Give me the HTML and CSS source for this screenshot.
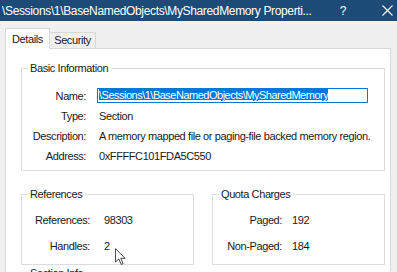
FILE: index.html
```html
<!DOCTYPE html>
<html>
<head>
<meta charset="utf-8">
<link rel="stylesheet" href="styles.css">
</head>
<body>
<div class="window">
  <div class="titlebar">
    <span class="title">\Sessions\1\BaseNamedObjects\MySharedMemory Properti...</span>
    <span class="tb-btn help">?</span>
    <span class="tb-btn close">
      <svg width="11" height="11" viewBox="0 0 11 11"><path d="M0.5 0.5 L10.5 10.5 M10.5 0.5 L0.5 10.5" stroke="#fff" stroke-width="1.1" fill="none"/></svg>
    </span>
  </div>
  <div class="body">
    <div class="tabs">
      <div class="tab active">Details</div>
      <div class="tab">Security</div>
    </div>
    <div class="panel">
      <fieldset class="group basic">
        <legend>Basic Information</legend>
        <div class="rows">
          <span class="lbl">Name:</span>
          <span class="val"><span class="field"><span class="sel">\Sessions\1\BaseNamedObjects\MySharedMemory</span></span></span>
          <span class="lbl">Type:</span>
          <span class="val">Section</span>
          <span class="lbl">Description:</span>
          <span class="val">A memory mapped file or paging-file backed memory region.</span>
          <span class="lbl">Address:</span>
          <span class="val">0xFFFFC101FDA5C550</span>
        </div>
      </fieldset>
      <div class="pair">
        <fieldset class="group refs">
          <legend>References</legend>
          <div class="rows2">
            <span class="lbl">References:</span><span class="val">98303</span>
            <span class="lbl">Handles:</span><span class="val">2</span>
          </div>
        </fieldset>
        <fieldset class="group quota">
          <legend>Quota Charges</legend>
          <div class="rows3">
            <span class="lbl">Paged:</span><span class="val">192</span>
            <span class="lbl">Non-Paged:</span><span class="val">184</span>
          </div>
        </fieldset>
      </div>
      <fieldset class="group section">
        <legend>Section Info</legend>
      </fieldset>
    </div>
  </div>
  <svg class="cursor" width="11" height="18" viewBox="0 0 13 21">
    <path d="M0.5 0.5 L0.5 16.5 L4.5 12.8 L7.3 19.3 L9.6 18.3 L6.9 12 L12 12 Z" fill="#fff" stroke="#222" stroke-width="1"/>
  </svg>
</div>
</body>
</html>
```
FILE: styles.css
```css
* { box-sizing: border-box; }
html, body { margin: 0; padding: 0; }
body {
  width: 397px;
  height: 272px;
  overflow: hidden;
  background: #f0f0f0;
  font-family: "Liberation Sans", Arial, sans-serif;
  font-size: 11px;
  letter-spacing: -0.4px;
  color: #1a1a1a;
}
.window { position: relative; width: 397px; height: 272px; overflow: hidden; }
.titlebar {
  height: 21px;
  background: #1d4b78;
  color: #fff;
  display: flex;
  align-items: center;
  font-size: 12px;
  letter-spacing: -0.35px;
  padding-left: 2px;
}
.title { width: 334px; white-space: nowrap; overflow: hidden; }
.tb-btn { display: flex; align-items: center; justify-content: center; }
.help { width: 14px; margin-right: 30px; font-size: 12px; }
.close { width: 14px; }
.body { padding: 6px 6px 0 5px; }
.tabs { display: flex; align-items: flex-end; height: 21px; position: relative; z-index: 1; }
.tab {
  border: 1px solid #d9d9d9;
  border-bottom: none;
  background: #f0f0f0;
  height: 16px;
  width: 46px;
  text-align: center;
  line-height: 15px;
}
.tab.active {
  background: #fff;
  width: 45px;
  height: 21px;
  padding-top: 3px;
  margin-bottom: -1px;
}
.tab + .tab { border-left: none; }
.panel {
  background: #fff;
  border: 1px solid #d9d9d9;
  height: 240px;
  padding: 13px 5px 0 15px;
}
.group {
  border: 1px solid #dcdcdc;
  margin: 0;
  padding: 0;
}
.group legend {
  padding: 0 3px 0 2px;
  margin-left: 6px;
  line-height: 13px;
}
.basic { height: 109px; }
.rows {
  display: grid;
  grid-template-columns: 64px auto;
  column-gap: 13px;
  row-gap: 6px;
  padding-top: 14px;
  line-height: 14px;
}
.lbl { text-align: right; }
.val { white-space: nowrap; }
.field {
  display: block;
  width: 271px;
  height: 15px;
  border: 1px solid #0078d7;
  padding: 0 1px;
  margin-left: -2px;
  margin-top: -1px;
  line-height: 12px;
  white-space: nowrap;
  overflow: hidden;
}
.sel {
  background: #0078d7;
  color: #fff;
  text-decoration: underline;
  letter-spacing: -0.5px;
}
.pair { display: flex; gap: 18px; margin-top: 17px; }
.refs, .quota { width: 173px; height: 77px; }
.rows2, .rows3 {
  display: grid;
  row-gap: 12px;
  padding-top: 12px;
  line-height: 14px;
}
.rows2 { grid-template-columns: 68px auto; column-gap: 14px; }
.rows3 { grid-template-columns: 69px auto; column-gap: 10px; }
.section { margin-top: 2px; height: 30px; }
.cursor { position: absolute; left: 115px; top: 248px; }
```
